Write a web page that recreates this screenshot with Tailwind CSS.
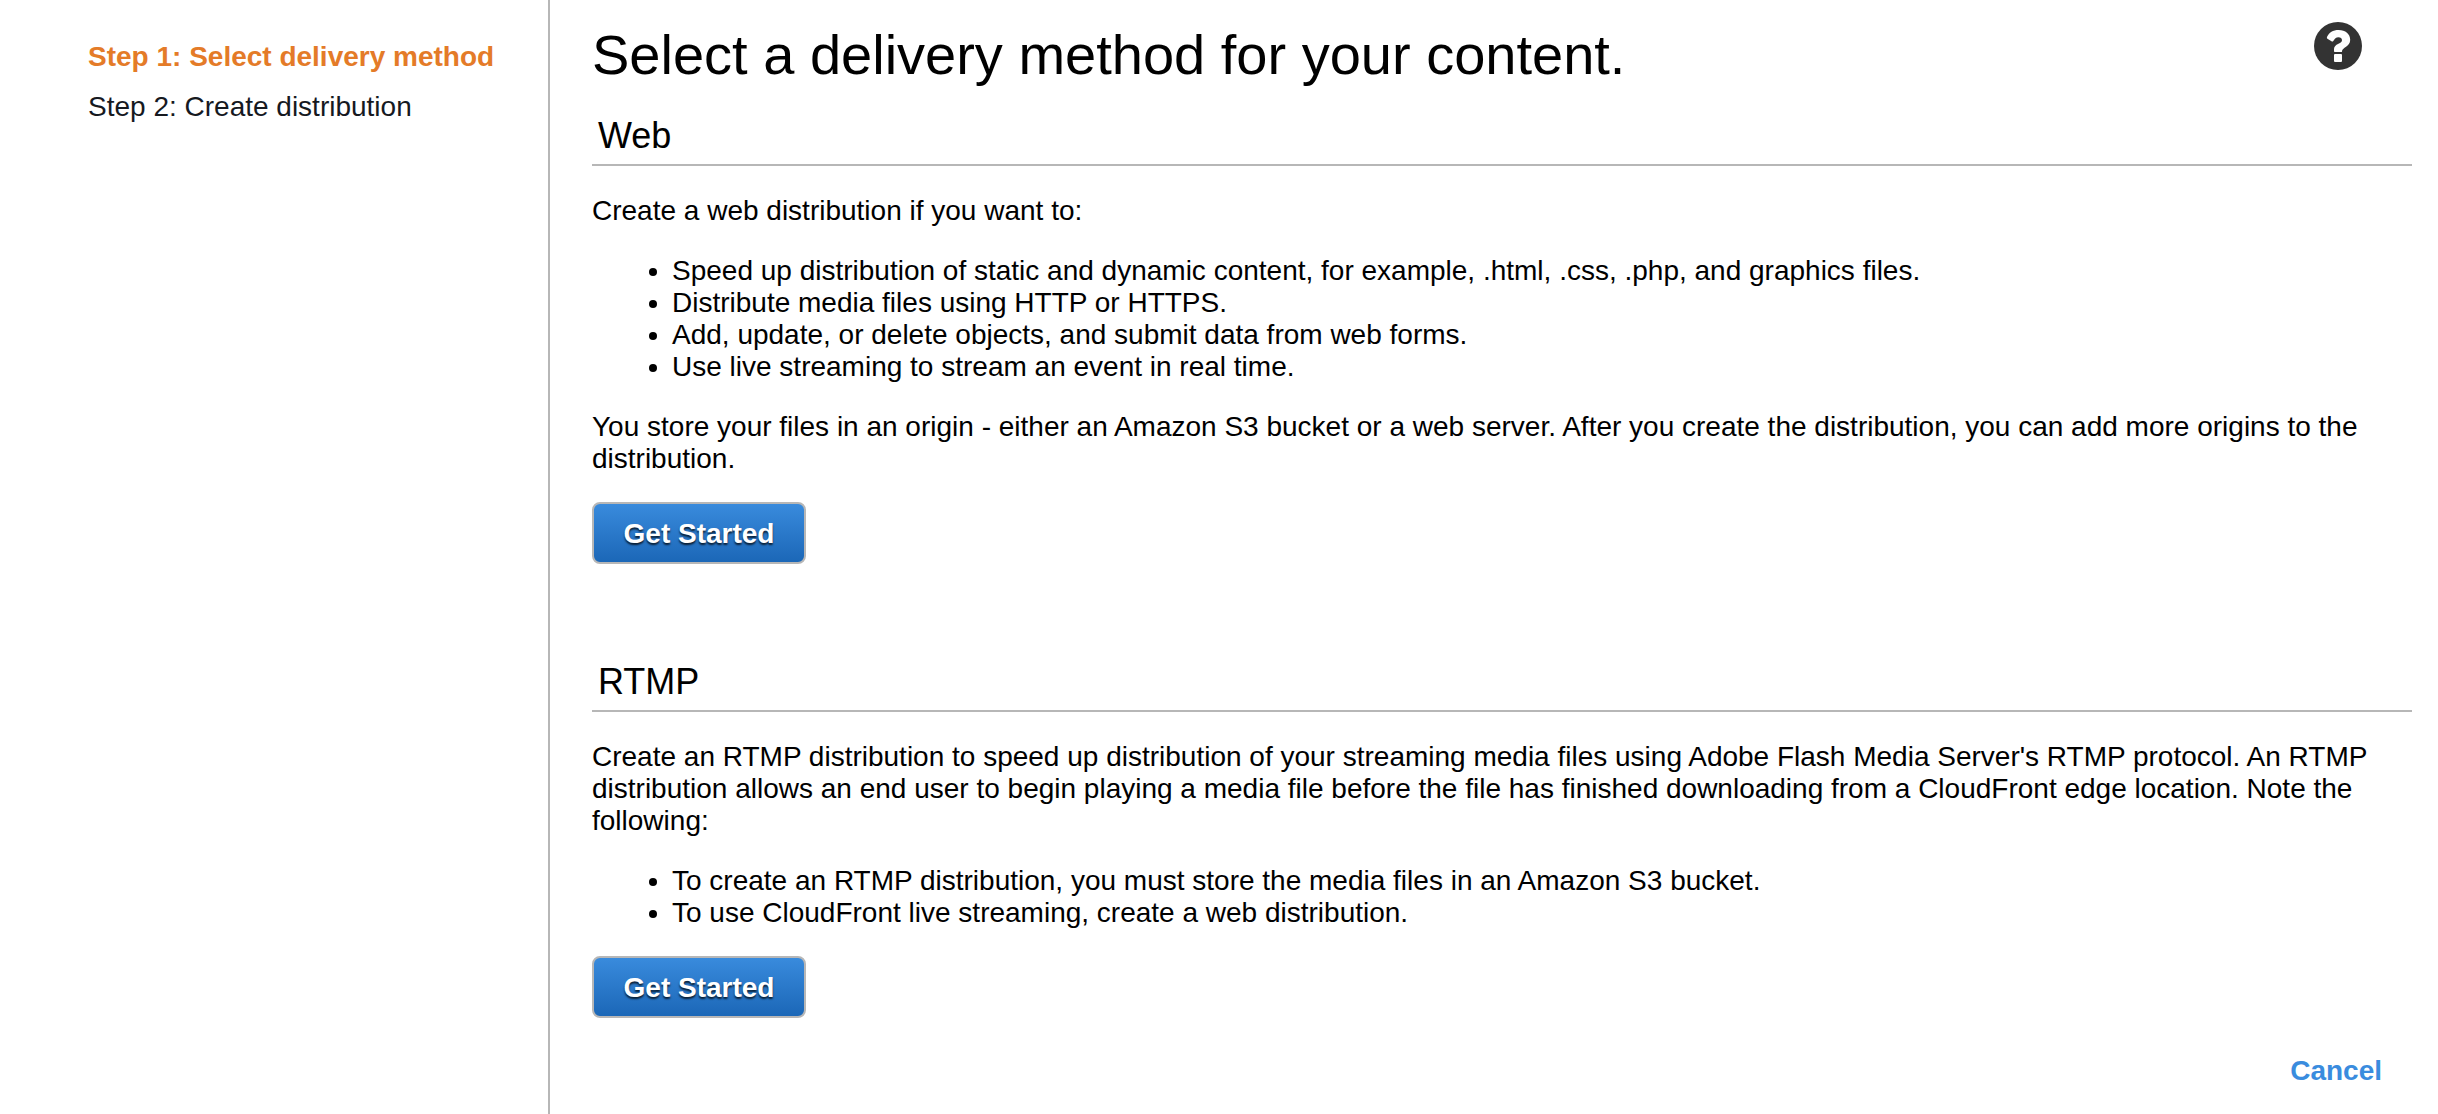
<!DOCTYPE html>
<html lang="en">
<head>
    <meta charset="UTF-8">
    <meta name="viewport" content="width=device-width, initial-scale=1.0">
    <title>Create Distribution</title>
    <script src="https://cdn.jsdelivr.net/npm/@tailwindcss/browser@4"></script>
</head>
<body class="bg-white text-black font-['Liberation_Sans',Arial,sans-serif] text-[28px] leading-[32px]">
    <div class="flex min-h-screen">
        <!-- Wizard steps -->
        <nav class="w-[550px] shrink-0 border-r-2 border-[#b7b7b7] pl-[88px] pt-[41px]">
            <ol class="space-y-[18px]">
                <li class="font-bold text-[#e47b28]" aria-current="step">Step 1: Select delivery method</li>
                <li class="text-[#16191f]">Step 2: Create distribution</li>
            </ol>
        </nav>

        <main class="flex-1 pl-[42px] pr-[26px] pt-[22px] pb-6">
            <div class="flex items-start justify-between pr-[50px] mb-7">
                <h1 class="text-[56px] leading-[66px]">Select a delivery method for your content.</h1>
                <button type="button" aria-label="Help" class="shrink-0">
                    <svg class="block size-12" viewBox="0 0 48 48" aria-hidden="true">
                        <circle cx="24" cy="24" r="24" fill="#333"/>
                        <path fill="#fff" d="M13 15C15 10.500 19 8 24.600 8C31.500 8 36.200 12 36.200 17.800C36.200 25 28 25.500 28 29.400Q28 30 27.300 30H20.700Q20 30 20 29.300V27C20 21.700 28 22 28 18.300C28 16.300 26.500 15.200 24.500 15.200C21.800 15.200 20.800 16.600 19.300 18.900Q18.500 20 17.500 19.300L13.400 16.800Q12.500 16 13 15Z"/>
                        <rect x="20" y="32" width="8" height="8" rx="1" fill="#fff"/>
                    </svg>
                </button>
            </div>

            <!-- Web distribution -->
            <section>
                <h2 class="text-[36px] leading-[40px] pl-1.5 pb-2 mb-[29px] border-b-2 border-[#b7b7b7]">Web</h2>
                <p>Create a web distribution if you want to:</p>
                <ul class="list-disc pl-20 my-7">
                    <li>Speed up distribution of static and dynamic content, for example, .html, .css, .php, and graphics files.</li>
                    <li>Distribute media files using HTTP or HTTPS.</li>
                    <li>Add, update, or delete objects, and submit data from web forms.</li>
                    <li>Use live streaming to stream an event in real time.</li>
                </ul>
                <p>You store your files in an origin - either an Amazon S3 bucket or a web server. After you create the distribution, you can add more origins to the distribution.</p>
                <button type="button" class="block mt-[27px] h-[62px] min-w-[214px] px-7 pt-0.5 rounded-lg border-2 border-[#b7b7b7] bg-linear-to-b from-[#3a8cde] to-[#1a66b6] bg-origin-border font-bold text-white [text-shadow:0_2px_2px_rgba(0,0,0,0.75)]">Get Started</button>
            </section>

            <!-- RTMP distribution -->
            <section class="mt-[98px]">
                <h2 class="text-[36px] leading-[40px] pl-1.5 pb-2 mb-[29px] border-b-2 border-[#b7b7b7]">RTMP</h2>
                <p>Create an RTMP distribution to speed up distribution of your streaming media files using Adobe Flash Media Server's RTMP protocol. An RTMP distribution allows an end user to begin playing a media file before the file has finished downloading from a CloudFront edge location. Note the following:</p>
                <ul class="list-disc pl-20 mt-7">
                    <li>To create an RTMP distribution, you must store the media files in an Amazon S3 bucket.</li>
                    <li>To use CloudFront live streaming, create a web distribution.</li>
                </ul>
                <button type="button" class="block mt-[27px] h-[62px] min-w-[214px] px-7 pt-0.5 rounded-lg border-2 border-[#b7b7b7] bg-linear-to-b from-[#3a8cde] to-[#1a66b6] bg-origin-border font-bold text-white [text-shadow:0_2px_2px_rgba(0,0,0,0.75)]">Get Started</button>
            </section>

            <div class="flex justify-end mt-[37px] pr-[30px]">
                <a href="#" class="font-bold text-[#3a8cde]">Cancel</a>
            </div>
        </main>
    </div>
</body>
</html>
